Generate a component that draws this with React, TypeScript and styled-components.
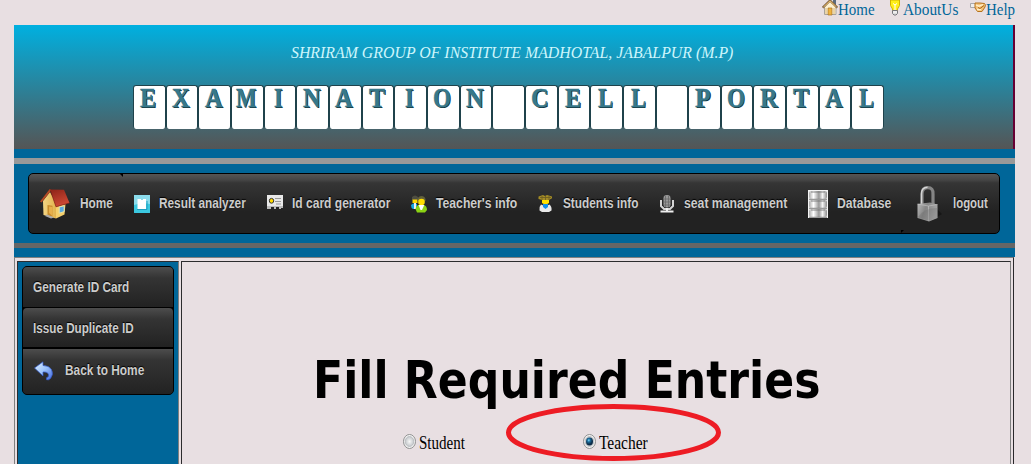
import React, { useLayoutEffect, useRef } from "react";
import styled, { createGlobalStyle, css } from "styled-components";

const GlobalStyle = createGlobalStyle`
  html, body { margin: 0; padding: 0; background: #e8dfe2; }
  body { overflow: hidden; font-family: "Liberation Serif", "Times New Roman", serif; }
  * { box-sizing: border-box; }
`;

const Page = styled.div`
  width: 1031px;
  height: 464px;
  padding: 0 16px 0 14px;
  overflow: hidden;
  display: flex;
  flex-direction: column;
`;

/* Text squeezed or stretched to a given column width */
const TextBox = styled.span<{ $width: number }>`
  display: block;
  flex: none;
  width: ${(p) => p.$width}px;
  white-space: nowrap;
`;
const TextRun = styled.span`
  display: inline-block;
  transform-origin: 0 50%;
`;
function FitText({ width, children }: { width: number; children: string }) {
  const ref = useRef<HTMLSpanElement>(null);
  useLayoutEffect(() => {
    const el = ref.current;
    if (el) el.style.transform = `scaleX(${width / el.offsetWidth})`;
  }, [width]);
  return (
    <TextBox $width={width}>
      <TextRun ref={ref}>{children}</TextRun>
    </TextBox>
  );
}

const TopLinks = styled.nav`
  height: 25px;
  flex: none;
  display: flex;
  justify-content: flex-end;
  gap: 12px;
`;
const TopLink = styled.a`
  display: flex;
  align-items: flex-start;
  color: #069;
  font-size: 17px;
  line-height: 19px;
  svg { display: block; flex: none; }
`;

const Banner = styled.header`
  height: 124px;
  flex: none;
  display: flex;
  flex-direction: column;
  align-items: center;
  border-right: 2px solid #603;
  background: linear-gradient(#00b0e0, #555);
`;
const Institute = styled.div`
  margin: 18px 0 0 -3px;
  height: 20px;
  font-size: 17px;
  line-height: 20px;
  font-style: italic;
  color: #cdf6fc;
`;
const Tiles = styled.h1`
  display: flex;
  width: 751px;
  height: 44px;
  margin: 22px 0 0 -10px;
  font-size: 27px;
  line-height: 24px;
`;
const Tile = styled.span`
  flex: 1;
  display: flex;
  justify-content: center;
  padding-right: 2px;
  background: #fff;
  border: solid #1f424b;
  border-width: 1px 1px 0 1px;
  border-radius: 3px;
  color: #37788a;
  -webkit-text-stroke: 0.5px #37788a;
  text-shadow: 1px 1px 0 #12333c;
`;

const Strip = styled.div`
  flex: none;
  height: 108px;
  padding: 9px 0;
  background: #069;
`;
const Rule = styled.div<{ $h: number; $tone: string }>`
  height: ${(p) => p.$h}px;
  background: ${(p) => p.$tone};
`;
const MenuBar = styled.nav`
  width: 972px;
  height: 61px;
  margin: 9px 0 9px 14px;
  border: 1px solid #000;
  border-radius: 5px;
  display: flex;
  background: linear-gradient(#555 0, #454545 6px, #353535 9px, #222 38px, #222);
`;
const label = css`
  font: bold 14px/18px "Liberation Sans", Arial, sans-serif;
  color: #ccc;
  text-shadow: 0 -1px 1px #000;
`;
const MenuItem = styled.a`
  position: relative;
  display: flex;
  align-items: center;
  gap: 9px;
  padding: 0 10px 0 11px;
  ${label}
  svg { display: block; flex: none; }
  ${TextBox} { margin-top: -2px; }
  &:first-child { gap: 10px; }
  &:first-child::after, &:last-child::after {
    content: "";
    position: absolute;
    border: 3px solid transparent;
    border-width: 0 0 3px 3px;
  }
  &:first-child::after {
    top: 0;
    right: 0;
    border-width: 3px 0 0 3px;
    border-top-color: #000;
  }
  &:last-child::after {
    bottom: 0;
    left: 0;
    border-left-color: #000;
  }
`;

const Frame = styled.main`
  flex: 1;
  width: 1000px;
  display: flex;
  gap: 2px;
  padding: 3px 2px 0;
  border: solid #808080;
  border-width: 1px 1px 0 1px;
  border-right-color: #2a282b;
`;
const Cell = styled.section`
  border: 1px solid #2c2c2e;
  border-right-color: #808080;
  border-bottom: 0;
`;
const Side = styled(Cell)`
  width: 162px;
  padding: 4px;
  background: #069;
`;
const SideMenu = styled.nav`
  height: 129px;
  border: 1px solid #000;
  border-radius: 5px;
  background: #000;
  display: flex;
  flex-direction: column;
`;
const SideItem = styled.a<{ $h: number; $after?: number }>`
  height: ${(p) => p.$h}px;
  margin-bottom: ${(p) => p.$after ?? 0}px;
  padding-left: 9.5px;
  display: flex;
  align-items: center;
  border-radius: 4px 4px 0 0;
  background: linear-gradient(#4d4d4d, #343434 11px, #222);
  ${label}
  &:last-child { border-radius: 0 0 4px 4px; padding: 0 0 3px 11px; }
  svg { margin: 2px 11px 0 0; flex: none; }
`;
const Content = styled(Cell)`
  width: 830px;
  position: relative;
`;
const Heading = styled.h2`
  margin: 88px 0 0 131px;
  height: 62px;
  font: bold 51px/62px "DejaVu Sans Condensed", "DejaVu Sans", Verdana, sans-serif;
  color: #000;
`;
const Choices = styled.div`
  display: flex;
  gap: 118px;
  margin: 19px 0 0 221px;
`;
const Choice = styled.label`
  display: flex;
  align-items: center;
  gap: 3px;
  font-size: 18px;
  line-height: 22px;
  color: #000;
  svg { margin-top: -2px; }
  ${TextBox} { margin-top: 1px; }
`;
const Marker = styled.svg`
  position: absolute;
  left: 322px;
  top: 140px;
`;

function Radio({ on }: { on?: boolean }) {
  return (
    <svg width="13" height="15" viewBox="0 0 13 15">
      <defs>
        <radialGradient id="off"><stop offset="0" stopColor="#f8f8f8" /><stop offset="1" stopColor="#c3c7ca" /></radialGradient>
        <radialGradient id="on" cx=".4" cy=".35"><stop offset="0" stopColor="#7fdcff" /><stop offset=".4" stopColor="#1c6f9f" /><stop offset="1" stopColor="#0c2c48" /></radialGradient>
      </defs>
      <ellipse cx="6.5" cy="7.5" rx="6" ry="7" fill="#f4f4f4" stroke="#8e8f8f" />
      <ellipse cx="6.5" cy="7.5" rx="4.3" ry="5" fill="url(#off)" stroke="#b4b8bb" strokeWidth=".8" />
      {on && <ellipse cx="6.5" cy="7.5" rx="3.5" ry="4" fill="url(#on)" />}
    </svg>
  );
}

const SmallHouse = () => (
  <svg width="16" height="16" viewBox="0 0 16 16">
    <path d="M11 0h3v5h-3z" fill="#5c6c80" />
    <path d="M2.5 7 8 1l6 6v7.5H2.5z" fill="#fff1cf" stroke="#a8a29b" />
    <path d="M.7 7.6 8 .5l7.3 7.1" fill="none" stroke="#806444" strokeWidth="2.2" />
    <path d="M1.5 7 8 .9 14.5 7" fill="none" stroke="#f4c46c" />
    <path d="M6 8h4v7H6z" fill="#f0b33d" stroke="#a6742a" strokeWidth=".7" />
    <path d="M4 8v6M12 8v6" stroke="#d6b77e" />
  </svg>
);
const Bulb = () => (
  <svg width="16" height="16" viewBox="0 0 16 16">
    <path d="M3.5 0h9v5.5L10.5 9v1.5h-5V9L3.5 5.5z" fill="#ffef18" stroke="#d3b300" />
    <path d="M6 3.5 8 5l2-1.5M8 5v5" fill="none" stroke="#fff" />
    <path d="M5.5 10.5h5v3L9 15H7l-1.5-1.5z" fill="#ddd" stroke="#77777c" />
    <path d="M6 12h4" stroke="#fff" />
  </svg>
);
const Hand = () => (
  <svg width="16" height="16" viewBox="0 0 16 16">
    <path d="M.5 3.5h5v4h-5z" fill="#eee" stroke="#a9a9ad" />
    <path d="M5 3h5l4.5.5q1.5 1 .5 3.5L12 11.5H7.5L5 8z" fill="#f4c27a" stroke="#b5721c" />
    <path d="m6 5 3 1.2L13 4.5M7 9.5h4" fill="none" stroke="#fff0c9" strokeWidth="1.3" />
    <path d="m8 7.5 2 1 4-3" fill="none" stroke="#a96412" />
  </svg>
);
const House = () => (
  <svg width="30" height="30" viewBox="0 0 30 30">
    <defs>
      <linearGradient id="roof" x2=".4" y2="1"><stop stopColor="#8c2318" /><stop offset="1" stopColor="#cf4934" /></linearGradient>
      <linearGradient id="wall" x2="1"><stop stopColor="#f5d684" /><stop offset="1" stopColor="#dfad45" /></linearGradient>
    </defs>
    <path d="M3 12 10 3l8 14-2 12.5L3.5 26z" fill="url(#wall)" />
    <path d="m16 17 9.5-2-1 10.5L16 29.5z" fill="#f5cf6b" />
    <path d="m10 .5 14 .2L29.5 14 16 18z" fill="url(#roof)" />
    <path d="M10.5.7.8 13" stroke="#b54a24" strokeWidth="2" />
    <path d="m10 .5 6 17.3L29.5 14" fill="none" stroke="#74180f" strokeWidth=".6" />
    <path d="m7.5 16 5 .8v11l-5-1.5z" fill="#c88b2b" />
    <path d="m9 17.5 3.5.5v9L9 24z" fill="#e7af4b" />
    <path d="m19.2 18 5-1.2v5.8l-5 1.6z" fill="#59a9df" stroke="#e9e3a5" />
    <path d="m5 27 6 2.5 3-1-7-3z" fill="#aaa" />
  </svg>
);
const Result = () => (
  <svg width="16" height="18" viewBox="0 0 16 18">
    <rect width="16" height="18" fill="#3bc8e0" rx=".6" />
    <path d="M0 0h16v9q-8-2-16 1z" fill="#8bdcec" />
    <path d="M3.5 4H7v1h2V4h3v10H3.5z" fill="#fff" />
    <path d="M3 14.5h10V6" fill="none" stroke="#209fc0" />
  </svg>
);
const IdCard = () => (
  <svg width="16" height="18" viewBox="0 0 16 18">
    <path d="M0 0h16v13h-2v1h-2v-2H9v2H7v-2H4v2H0z" fill="#e9e9e9" />
    <path d="M0 11h16v2h-2v1h-2v-2H9v2H7v-2H4v2H0z" fill="#bcbcbc" />
    <ellipse cx="4.5" cy="5.8" rx="2.2" ry="2.4" fill="#ffd900" stroke="#333" />
    <path d="M8 3.5h6M8 6.5h6M9 9h5" stroke="#999" />
  </svg>
);
const Teachers = () => (
  <svg width="16" height="18" viewBox="0 0 16 18">
    <path d="M1 2q3-3 6 0v3H1z" fill="#4e4e42" />
    <path d="M1.5 4.5h5V8h-5z" fill="#ffd800" />
    <path d="M0 10q3-3 6-1v5H2q-2-1-2-4" fill="#14a9e4" />
    <path d="M4 8v6" stroke="#eee" strokeWidth="2" />
    <path d="M6.5 4q1-3 4-3t4 3v2h-8z" fill="#62603b" />
    <ellipse cx="10.5" cy="7" rx="3.3" ry="3.2" fill="#ffdd00" />
    <path d="M4.5 14q1-4 3.5-4h5q3 1 3 5l-2 2.5H6z" fill="#8bd313" />
    <path d="m7.5 10 2 5h1.5l2.3-5z" fill="#fff" />
  </svg>
);
const Student = () => (
  <svg width="16" height="18" viewBox="0 0 16 18">
    <path d="M.5 1.5 5 0l2 1 2-1 5 1.5v1.7L11 5v1H4V5L.5 4z" fill="#a48c25" />
    <path d="M2 2.5h11M4 1v4M7.5 1v4M11 1v4" stroke="#695c23" strokeWidth=".8" />
    <path d="M4 5h7v3L7.5 10 4 8z" fill="#ffe000" />
    <path d="M3 9.5q-2 2-1.5 6L4 17h7l2.5-1.5q.5-4-2-6l-4 2z" fill="#e9e9e9" />
    <path d="M5 9h5v3l-2.5 2L5 12z" fill="#108ee9" />
  </svg>
);
const Mic = () => (
  <svg width="16" height="18" viewBox="0 0 16 18">
    <path d="M2 5v6l3 3h6l3-3V5" fill="none" stroke="#d4d4d4" strokeWidth="2" />
    <rect x="4.5" y="0" width="7" height="12.5" rx="3.3" fill="#989898" />
    <path d="M6.5 1v11M9.5 1v11M5 4h6M5 7h6M5 10h6" stroke="#686868" strokeWidth=".8" />
    <path d="M8 13v3M1.5 16.5h13" stroke="#eee" strokeWidth="2" />
  </svg>
);
const Database = () => (
  <svg width="20" height="28" viewBox="0 0 20 28">
    <defs><linearGradient id="disk"><stop stopColor="#aaa" /><stop offset=".25" stopColor="#fff" /><stop offset=".55" stopColor="#999" /><stop offset=".75" stopColor="#f4f4f4" /><stop offset="1" stopColor="#8d8d8d" /></linearGradient></defs>
    <path d="M0 0h20v28H0z" fill="#f5f5f5" />
    {[1, 10, 19].map((y) => (
      <g key={y}>
        <rect x="1" y={y} width="18" height="8" rx="2" fill="url(#disk)" />
        <path d={`M1 ${y + 8.3}h18M3 ${y + 1}h14`} stroke="#777" strokeWidth=".9" />
      </g>
    ))}
  </svg>
);
const Lock = () => (
  <svg width="32" height="38" viewBox="0 0 32 38">
    <defs><linearGradient id="lockBody" x2="1" y2=".4"><stop stopColor="#bbb" /><stop offset=".45" stopColor="#858585" /><stop offset="1" stopColor="#a9a9a9" /></linearGradient></defs>
    <path d="m20 35 10-6-5-5z" fill="#161616" />
    <path d="M10 20V9q0-6.3 5.7-6.3T21 9v12" fill="none" stroke="#858585" strokeWidth="3.2" />
    <path d="M9.5 20V9q0-6.8 6-6.8" fill="none" stroke="#d6d6d6" strokeWidth="1.4" />
    <path d="M5.5 19 18 17.5l7.5 2V33L17 36.5 5.5 33z" fill="url(#lockBody)" />
    <path d="m5.5 19 11 2 9-1.5M16.5 21v15" fill="none" stroke="#c7c7c7" strokeWidth=".6" />
    <path d="M6 32q6-9 19-9v10l-8 3z" fill="#686868" opacity=".3" />
  </svg>
);
const BackArrow = () => (
  <svg width="20" height="20" viewBox="0 0 20 20">
    <defs><linearGradient id="back" x2="1" y2="1"><stop stopColor="#e3f2ff" /><stop offset=".5" stopColor="#9bc2fa" /><stop offset="1" stopColor="#4167df" /></linearGradient></defs>
    <path d="M.5 7 9 .8v3.7q6 0 8.5 4 2.5 5-1 9-2 2-4 1.2v-2q2.5-.5 2-3.2-.7-2.8-5.5-2.5v4z" fill="url(#back)" stroke="#3157c8" strokeWidth=".7" />
  </svg>
);

const topLinks = [
  { text: "Home", width: 37, icon: <SmallHouse /> },
  { text: "AboutUs", width: 55, icon: <Bulb /> },
  { text: "Help", width: 29, icon: <Hand /> },
];
const menu = [
  { text: "Home", width: 33, icon: <House /> },
  { text: "Result analyzer", width: 87, icon: <Result /> },
  { text: "Id card generator", width: 98, icon: <IdCard /> },
  { text: "Teacher's info", width: 81, icon: <Teachers /> },
  { text: "Students info", width: 75, icon: <Student /> },
  { text: "seat management", width: 103, icon: <Mic /> },
  { text: "Database", width: 54, icon: <Database /> },
  { text: "logout", width: 35, icon: <Lock /> },
];
const letterWidths: Record<string, number> = { M: 20, I: 9, L: 15, E: 16, P: 16, T: 16 };

export default function App() {
  return (
    <>
      <GlobalStyle />
      <Page>
        <TopLinks>
          {topLinks.map((l) => (
            <TopLink key={l.text}>{l.icon}<FitText width={l.width}>{l.text}</FitText></TopLink>
          ))}
        </TopLinks>
        <Banner>
          <Institute><FitText width={442}>SHRIRAM GROUP OF INSTITUTE MADHOTAL, JABALPUR (M.P)</FitText></Institute>
          <Tiles>
            {"EXAMINATION CELL PORTAL".split("").map((c, i) => (
              <Tile key={i}>{c !== " " && <FitText width={letterWidths[c] ?? 18}>{c}</FitText>}</Tile>
            ))}
          </Tiles>
        </Banner>
        <Strip>
          <Rule $h={6} $tone="#999" />
          <MenuBar>
            {menu.map((m) => (
              <MenuItem key={m.text}>{m.icon}<FitText width={m.width}>{m.text}</FitText></MenuItem>
            ))}
          </MenuBar>
          <Rule $h={5} $tone="#666" />
        </Strip>
        <Frame>
          <Side>
            <SideMenu>
              <SideItem $h={40} $after={1}><FitText width={96}>Generate ID Card</FitText></SideItem>
              <SideItem $h={39} $after={2}><FitText width={101}>Issue Duplicate ID</FitText></SideItem>
              <SideItem $h={45}><BackArrow /><FitText width={79}>Back to Home</FitText></SideItem>
            </SideMenu>
          </Side>
          <Content>
            <Heading><FitText width={507}>Fill Required Entries</FitText></Heading>
            <Choices>
              <Choice><Radio /><FitText width={46}>Student</FitText></Choice>
              <Choice><Radio on /><FitText width={49}>Teacher</FitText></Choice>
            </Choices>
            <Marker width="220" height="62" viewBox="0 0 220 62">
              <ellipse cx="109.5" cy="30.5" rx="105" ry="26" fill="none" stroke="#ed1c24" strokeWidth="5" />
            </Marker>
          </Content>
        </Frame>
      </Page>
    </>
  );
}
